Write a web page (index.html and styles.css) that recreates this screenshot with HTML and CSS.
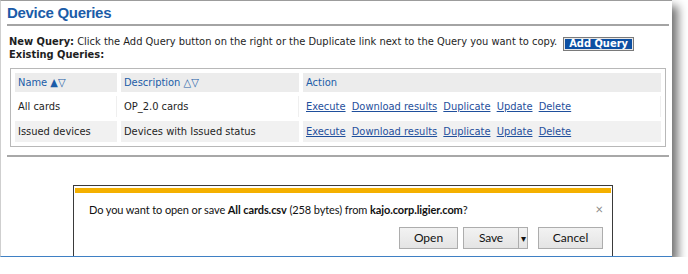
FILE: index.html
```html
<!DOCTYPE html>
<html>
<head>
	<meta charset="UTF-8">
	<link rel="stylesheet" href="styles.css">
</head>
<body>
	<div class="window">
		<h1 class="page-title">Device Queries</h1>

		<div class="new-query">
			<span><b>New Query:</b> Click the Add Query button on the right or the Duplicate link next to the Query you want to copy.</span>
			<button class="add-btn">Add Query</button>
		</div>
		<div class="existing"><b>Existing Queries:</b></div>

		<div class="query-box">
			<table class="queries">
				<colgroup>
					<col class="col-name">
					<col class="col-desc">
					<col>
				</colgroup>
				<tr class="head">
					<th>Name <span class="sort">&#9650;&#9661;</span></th>
					<th>Description <span class="sort">&#9651;&#9661;</span></th>
					<th>Action</th>
				</tr>
				<tr class="odd">
					<td>All cards</td>
					<td>OP_2.0 cards</td>
					<td class="actions">
						<a href="#">Execute</a>
						<a href="#">Download results</a>
						<a href="#">Duplicate</a>
						<a href="#">Update</a>
						<a href="#">Delete</a>
					</td>
				</tr>
				<tr class="even">
					<td>Issued devices</td>
					<td>Devices with Issued status</td>
					<td class="actions">
						<a href="#">Execute</a>
						<a href="#">Download results</a>
						<a href="#">Duplicate</a>
						<a href="#">Update</a>
						<a href="#">Delete</a>
					</td>
				</tr>
			</table>
		</div>

		<div class="bottom-rule"></div>

		<!-- download notification bar sits over the page -->
		<div class="download-bar">
			<div class="download-stripe"></div>
			<div class="download-msg">
				Do you want to open or save <b>All cards.csv</b> (258 bytes) from <b>kajo.corp.ligier.com</b>?
				<span class="close">&#215;</span>
			</div>
			<div class="download-buttons">
				<button class="dl-btn btn-open">Open</button>
				<div class="dl-btn btn-save">
					<span class="save-label">Save</span>
					<span class="save-arrow">&#9662;</span>
				</div>
				<button class="dl-btn btn-cancel">Cancel</button>
			</div>
		</div>
	</div>
</body>
</html>
```

FILE: styles.css
```css
body {
	background-color: #fff;
	padding: 0;
	margin: 0;
}

.window {
	position: relative;
	width: 662px;
	height: 255px;
	padding: 0 3px 0 6px;
	border-top: 1px solid #9c9c9c;
	border-left: 1px solid #cfcfcf;
	border-bottom: 1px solid #3f80c4;
	box-shadow: 6px 6px 9px rgba(0, 0, 0, 0.55);
	font-family: "DejaVu Sans Condensed", "DejaVu Sans", sans-serif;
	font-stretch: condensed;
	font-size: 11px;
	color: #1e1e1e;
}

.page-title {
	margin: 0;
	padding: 2px 0 1px 0;
	line-height: 20px;
	font-family: "Liberation Sans", Arial, sans-serif;
	font-stretch: normal;
	font-size: 15px;
	letter-spacing: -0.3px;
	font-weight: bold;
	color: #1b5ca8;
	border-bottom: 2px solid #a4a4a4;
}

.new-query {
	display: flex;
	align-items: flex-start;
	height: 13px;
	line-height: 13px;
	margin-top: 9px;
	padding-left: 2px;
}

.add-btn {
	box-sizing: border-box;
	margin: 2px 0 0 6px;
	height: 14px;
	padding: 0 5px;
	border: 1px solid #7a7a7a;
	box-shadow: inset 0 0 0 1px #e8e8e8;
	background: #0c4fa2;
	color: #fff;
	font-family: inherit;
	font-stretch: condensed;
	font-size: 11px;
	font-weight: bold;
	line-height: 12px;
}

.existing {
	line-height: 13px;
	padding-left: 2px;
}

.query-box {
	margin: 7px 3px 0 3px;
}

.queries {
	width: 100%;
	table-layout: fixed;
	border: 1px solid #b8b8b8;
	border-spacing: 4px;
	font-size: 11px;
}

.col-name {
	width: 102px;
}

.col-desc {
	width: 178px;
}

.queries th,
.queries td {
	padding: 0 0 0 3px;
	text-align: left;
	white-space: nowrap;
}

.queries th {
	height: 19px;
	background: #ececec;
	color: #1b5ca8;
	font-weight: normal;
}

.queries td {
	height: 21px;
}

.odd td {
	background: #fff;
	border-right: 1px solid #efefef;
}

.even td {
	background: #f1f1f1;
}

.sort {
	font-size: 11px;
}

.actions a {
	color: #1f4f9c;
	margin-right: 3px;
}

.bottom-rule {
	margin-top: 8px;
	border-top: 2px solid #a8a8a8;
}

.download-bar {
	position: absolute;
	left: 72px;
	bottom: 0;
	width: 536px;
	height: 68px;
	padding: 2px 1px 0 1px;
	border: 1px solid #3a3a3a;
	border-bottom: none;
	background: #fff;
	font-family: "Lato", "Liberation Sans", sans-serif;
	font-stretch: normal;
	font-size: 11px;
	letter-spacing: -0.1px;
	color: #111;
}

.download-stripe {
	height: 5px;
	background: #f4b000;
}

.download-msg {
	position: relative;
	padding: 10px 0 0 14px;
	line-height: 14px;
}

.close {
	position: absolute;
	right: 8px;
	top: 9px;
	color: #8a8a8a;
	font-size: 13px;
}

.download-buttons {
	display: flex;
	justify-content: flex-end;
	margin: 10px 8px 0 0;
}

.dl-btn {
	box-sizing: border-box;
	height: 22px;
	border: 1px solid #adadad;
	background: linear-gradient(#f2f2f2, #e4e4e4);
	color: #111;
	font-family: inherit;
	font-size: 12px;
	line-height: 20px;
	text-align: center;
	padding: 0;
}

.btn-open {
	width: 59px;
}

.btn-save {
	display: flex;
	width: 65px;
	margin-left: 5px;
}

.save-label {
	width: 54px;
	border-right: 1px solid #adadad;
}

.save-arrow {
	flex: 1;
	font-size: 10px;
}

.btn-cancel {
	width: 65px;
	margin-left: 10px;
}
```
